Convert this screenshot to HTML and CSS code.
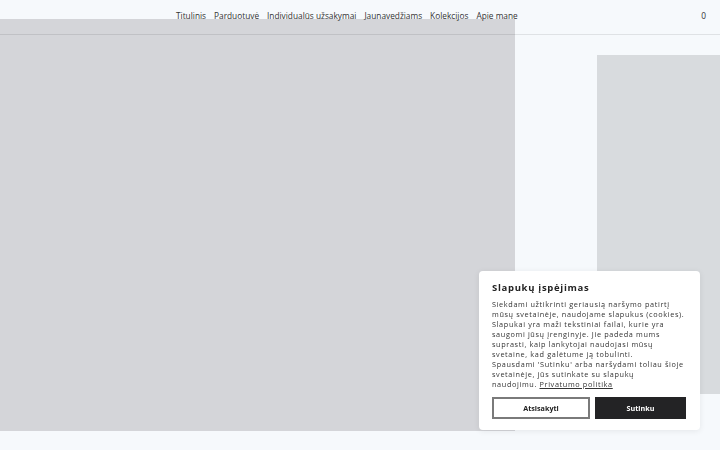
FILE: index.html
```html
<!DOCTYPE html>
<html lang="lt">
<head>
  <meta charset="UTF-8">
  <meta name="viewport" content="width=device-width, initial-scale=1.0">
  <title>Titulinis</title>
  <link rel="stylesheet" href="styles.css">
</head>
<body>
  <header class="site-header">
    <nav class="main-nav">
      <a href="#">Titulinis</a>
      <a href="#">Parduotuvė</a>
      <a href="#">Individualūs užsakymai</a>
      <a href="#">Jaunavedžiams</a>
      <a href="#">Kolekcijos</a>
      <a href="#">Apie mane</a>
    </nav>
    <a href="#" class="cart-count">0</a>
  </header>

  <main class="hero">
    <div class="hero-image"></div>
    <div class="hero-side">
      <div class="side-image"></div>
    </div>
  </main>

  <div class="cookie-box">
    <h3>Slapukų įspėjimas</h3>
    <p>Siekdami užtikrinti geriausią naršymo patirtį mūsų svetainėje, naudojame slapukus (cookies). Slapukai yra maži tekstiniai failai, kurie yra saugomi jūsų įrenginyje. Jie padeda mums suprasti, kaip lankytojai naudojasi mūsų svetaine, kad galėtume ją tobulinti.<br>Spausdami 'Sutinku' arba naršydami toliau šioje svetainėje, jūs sutinkate su slapukų <span class="nowrap">naudojimu. <a href="#">Privatumo politika</a></span></p>
    <div class="cookie-buttons">
      <button class="btn-decline">Atsisakyti</button>
      <button class="btn-accept">Sutinku</button>
    </div>
  </div>
</body>
</html>
```

FILE: styles.css
```css
body {
  margin: 0;
  background-color: #f6f9fc;
  font-family: "Open Sans", Lato, sans-serif;
  color: #333;
  height: 450px;
  overflow: hidden;
}
.site-header {
  position: absolute;
  top: 0;
  left: 0;
  right: 0;
  height: 34px;
  border-bottom: 1px solid rgba(0, 0, 0, 0.09);
  display: flex;
  align-items: flex-start;
  z-index: 2;
}
.main-nav {
  display: flex;
  gap: 8px;
  margin-left: 176px;
  padding-top: 10px;
}
.main-nav a, .cart-count {
  color: #333;
  text-decoration: none;
  font-size: 8.3px;
  letter-spacing: 0;
}
.cart-count {
  margin-left: auto;
  margin-right: 14px;
  padding-top: 10px;
}
.hero {
  display: flex;
  padding-top: 19px;
}
.hero-image {
  width: 515px;
  height: 412px;
  background-color: #d4d5d9;
}
.hero-side {
  flex: 1;
  padding-left: 82px;
  padding-top: 36px;
}
.side-image {
  height: 339px;
  background-color: #d8dbde;
}
.cookie-box {
  position: fixed;
  right: 20px;
  bottom: 20px;
  width: 194px;
  padding: 10px 14px 11px 13px;
  background-color: #fff;
  border-radius: 4px;
  box-shadow: 0 1px 6px rgba(0, 0, 0, 0.08);
  z-index: 3;
}
.cookie-box h3 {
  margin: 0 0 5px;
  font-size: 9.5px;
  font-weight: bold;
  letter-spacing: 0.7px;
  color: #222;
}
.cookie-box p {
  margin: 0 -2px 0 0;
  font-size: 7.3px;
  line-height: 10px;
  letter-spacing: 0.63px;
  color: #333;
}
.cookie-box p a {
  color: #333;
}
.nowrap {
  white-space: nowrap;
}
.cookie-buttons {
  display: flex;
  gap: 5px;
  margin-top: 8px;
}
.cookie-buttons button {
  height: 22px;
  font-family: inherit;
  font-size: 7.2px;
  font-weight: bold;
  cursor: pointer;
}
.btn-decline {
  width: 98px;
  background-color: #fff;
  border: 2px solid #7a7a7a;
  color: #222;
}
.btn-accept {
  flex: 1;
  background-color: #232325;
  border: none;
  color: #fff;
}
```
